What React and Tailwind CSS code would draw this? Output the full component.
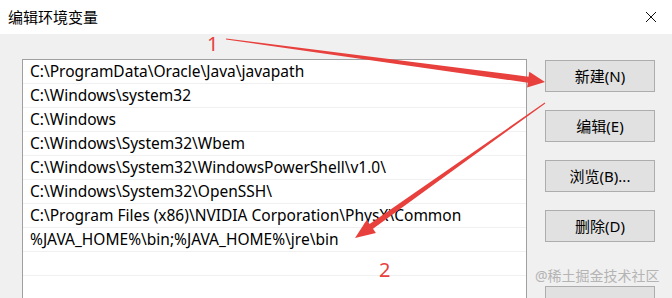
import React from 'react';

const paths = [
  'C:\\ProgramData\\Oracle\\Java\\javapath',
  'C:\\Windows\\system32',
  'C:\\Windows',
  'C:\\Windows\\System32\\Wbem',
  'C:\\Windows\\System32\\WindowsPowerShell\\v1.0\\',
  'C:\\Windows\\System32\\OpenSSH\\',
  'C:\\Program Files (x86)\\NVIDIA Corporation\\PhysX\\Common',
  '%JAVA_HOME%\\bin;%JAVA_HOME%\\jre\\bin',
  '',
  '',
];

const buttons = ['新建(N)', '编辑(E)', '浏览(B)...', '删除(D)'];

const font = { fontFamily: '"Noto Sans", "Noto Sans CJK SC", sans-serif' };

const App = () => (
  <div className="relative w-[672px] h-[298px] overflow-hidden bg-[#f0f0f0] text-[#000]" style={font}>
    <div className="h-[34px] bg-white flex items-center justify-between pl-[8px] pr-[14px]">
      <span className="text-[15px]">编辑环境变量</span>
      <svg width="12" height="12" viewBox="0 0 12 12" className="mr-[1px]">
        <path d="M1 1L11 11M11 1L1 11" stroke="#111" strokeWidth="1" fill="none" />
      </svg>
    </div>

    <div className="flex pl-[22px] pt-[25px]">
      <div className="w-[505px] h-[260px] bg-white border border-[#a0a0a0]">
        {paths.map((p, i) => (
          <div key={i} className="h-[24px] border-b border-[#f0f0f0] pl-[7px] flex items-center text-[15.5px] whitespace-nowrap overflow-hidden">
            {p}
          </div>
        ))}
      </div>
      <div className="ml-[18px] mt-[1px] flex flex-col gap-[18px]">
        {buttons.map((b) => (
          <div key={b} className="w-[110px] h-[32px] bg-[#e1e1e1] border border-[#adadad] flex items-center justify-center text-[15px]">
            {b}
          </div>
        ))}
        <div className="mt-[26px] w-[110px] h-[32px] bg-[#e1e1e1] border border-[#adadad] flex items-start justify-center pt-[8px] text-[15px]">
          上移(U)
        </div>
      </div>
    </div>

    <svg className="absolute left-0 top-0 pointer-events-none" width="672" height="298">
      <polygon points="226,38.5 528.6,76.7 529.3,71.8 545,82 527.1,87.6 527.8,82.7 226,39.5" fill="#e8403c" />
      <polygon points="545.3,103.4 373,228.8 375.9,232.9 355,238 366.7,219.9 369.6,224 544.7,102.6" fill="#e8403c" />
    </svg>

    <span className="absolute left-[207px] top-[32px] text-[20px] leading-[24px] text-[#e8403c]">1</span>
    <span className="absolute left-[379px] top-[258px] text-[20px] leading-[24px] text-[#e8403c]">2</span>
    <span className="absolute left-[535px] top-[267px] text-[14px] leading-[18px] text-[#b4b4b4]">@稀土掘金技术社区</span>
  </div>
);

export default App;
